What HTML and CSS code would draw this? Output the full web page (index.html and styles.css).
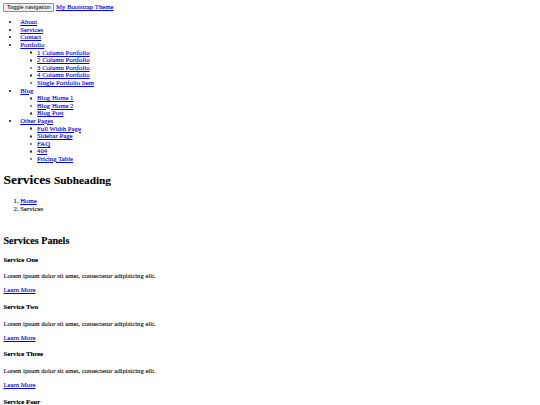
FILE: index.html
```html
<!DOCTYPE html>
<html>
<head>
<meta charset="utf-8">
<title>Services</title>
<link rel="stylesheet" href="styles.css">
</head>
<body>
<nav class="topnav">
  <div class="nav-head"><button class="toggle" type="button">Toggle navigation</button> <a class="brand" href="#">My Bootstrap Theme</a></div>
  <ul class="menu">
    <li><a href="#">About</a></li>
    <li><a href="#">Services</a></li>
    <li><a href="#">Contact</a></li>
    <li><a href="#">Portfolio</a>
      <ul class="sub">
        <li><a href="#">1 Column Portfolio</a></li>
        <li><a href="#">2 Column Portfolio</a></li>
        <li><a href="#">3 Column Portfolio</a></li>
        <li><a href="#">4 Column Portfolio</a></li>
        <li><a href="#">Single Portfolio Item</a></li>
      </ul>
    </li>
    <li><a href="#">Blog</a>
      <ul class="sub">
        <li><a href="#">Blog Home 1</a></li>
        <li><a href="#">Blog Home 2</a></li>
        <li><a href="#">Blog Post</a></li>
      </ul>
    </li>
    <li><a href="#">Other Pages</a>
      <ul class="sub">
        <li><a href="#">Full Width Page</a></li>
        <li><a href="#">Sidebar Page</a></li>
        <li><a href="#">FAQ</a></li>
        <li><a href="#">404</a></li>
        <li><a href="#">Pricing Table</a></li>
      </ul>
    </li>
  </ul>
</nav>
<main class="page">
  <h1 class="page-title">Services <small class="sub-title">Subheading</small></h1>
  <ol class="crumbs">
    <li><a href="#">Home</a></li>
    <li>Services</li>
  </ol>
  <div class="spacer"></div>
  <h2 class="section-title">Services Panels</h2>
  <div class="panel">
    <h4 class="panel-title">Service One</h4>
    <p class="panel-text">Lorem ipsum dolor sit amet, consectetur adipisicing elit.</p>
    <a href="#">Learn More</a>
  </div>
  <div class="panel">
    <h4 class="panel-title">Service Two</h4>
    <p class="panel-text">Lorem ipsum dolor sit amet, consectetur adipisicing elit.</p>
    <a href="#">Learn More</a>
  </div>
  <div class="panel">
    <h4 class="panel-title">Service Three</h4>
    <p class="panel-text">Lorem ipsum dolor sit amet, consectetur adipisicing elit.</p>
    <a href="#">Learn More</a>
  </div>
  <div class="panel">
    <h4 class="panel-title">Service Four</h4>
    <p class="panel-text">Lorem ipsum dolor sit amet, consectetur adipisicing elit.</p>
    <a href="#">Learn More</a>
  </div>
</main>
</body>
</html>
```

FILE: styles.css
```css
html {
  background: #ffffff;
}
body {
  margin: 3.375px;
  font-family: "Liberation Serif", "Times New Roman", serif;
  font-size: 6.75px;
  line-height: 7.59px;
  color: #111111;
  -webkit-text-stroke: 0.12px currentColor;
}
a {
  color: #0000ee;
  text-decoration: underline;
  text-decoration-thickness: 0.5px;
  text-underline-offset: 0.6px;
}
.nav-head {
  height: 8.1px;
}
.toggle {
  font-family: "Liberation Sans", Arial, sans-serif;
  font-size: 5.625px;
  line-height: 6.5px;
  height: 8.6px;
  padding: 0 2.6px;
  margin: 0;
  vertical-align: top;
  background: #efefef;
  color: #000;
  border: 0.8px solid #8f8f8f;
  border-radius: 1px;
  -webkit-text-stroke: 0;
}
.brand {
  vertical-align: top;
  line-height: 8.6px;
}
.menu {
  margin: 6.75px 0;
  padding-left: 16.875px;
  list-style: disc;
}
.sub {
  margin: 0;
  padding-left: 16.875px;
  list-style: none;
}
.sub > li::before {
  content: "";
  display: inline-block;
  box-sizing: border-box;
  width: 2.6px;
  height: 2.6px;
  border: 0.6px solid #333333;
  border-radius: 50%;
  margin-left: -7.3px;
  margin-right: 4.7px;
  vertical-align: 0.6px;
}
.page-title {
  font-size: 13.5px;
  line-height: 15.6px;
  margin: 9.05px 0;
  font-weight: bold;
  color: #000;
}
.sub-title {
  font-size: 11.25px;
}
.crumbs {
  margin: 6.75px 0;
  padding-left: 16.875px;
}
.spacer {
  height: 7.25px;
}
.section-title {
  font-size: 10.125px;
  line-height: 11.8px;
  margin: 8.4px 0;
  color: #000;
}
.panel-title {
  font-size: 6.75px;
  margin: 8.98px 0;
  color: #000;
}
.panel-text {
  margin: 6.75px 0;
}
```
